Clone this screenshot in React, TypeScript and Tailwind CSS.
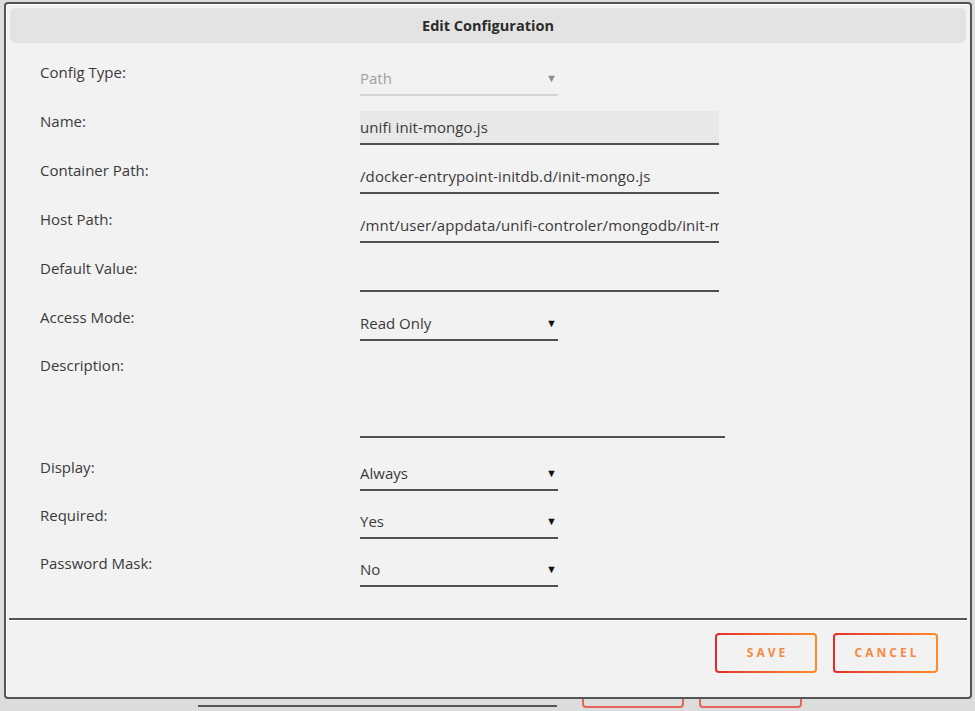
import React from 'react';

type Row = {
  label: string;
  value?: string;
  kind: 'select' | 'input' | 'textarea' | 'disabled';
  filled?: boolean;
  height: string;
};

const rows: Row[] = [
  { label: 'Config Type:', value: 'Path', kind: 'disabled', height: 'h-[49px]' },
  { label: 'Name:', value: 'unifi init-mongo.js', kind: 'input', filled: true, height: 'h-[49px]' },
  { label: 'Container Path:', value: '/docker-entrypoint-initdb.d/init-mongo.js', kind: 'input', height: 'h-[49px]' },
  { label: 'Host Path:', value: '/mnt/user/appdata/unifi-controler/mongodb/init-mongo.js', kind: 'input', height: 'h-[49px]' },
  { label: 'Default Value:', value: '', kind: 'input', height: 'h-[49px]' },
  { label: 'Access Mode:', value: 'Read Only', kind: 'select', height: 'h-[48px]' },
  { label: 'Description:', value: '', kind: 'textarea', height: 'h-[102px]' },
  { label: 'Display:', value: 'Always', kind: 'select', height: 'h-[48px]' },
  { label: 'Required:', value: 'Yes', kind: 'select', height: 'h-[48px]' },
  { label: 'Password Mask:', value: 'No', kind: 'select', height: 'h-[48px]' },
];

function Field({ row }: { row: Row }) {
  if (row.kind === 'disabled') {
    return (
      <div className="flex h-[34px] w-[198px] items-start justify-between border-b-2 border-[#d4d4d4] pt-[6px] leading-5 text-[#a0a0a0]">
        <span>{row.value}</span>
        <span className="pr-[1px] text-[11px] leading-5 text-[#8a8a8a]">▼</span>
      </div>
    );
  }
  if (row.kind === 'select') {
    return (
      <div className="flex h-[34px] w-[198px] items-start justify-between border-b-2 border-[#505050] pt-[6px] leading-5 text-[#3a3a3a]">
        <span>{row.value}</span>
        <span className="pr-[1px] text-[11px] leading-5 text-[#111]">▼</span>
      </div>
    );
  }
  if (row.kind === 'textarea') {
    return <div className="h-[83px] w-[365px] border-b-2 border-[#505050]" />;
  }
  return (
    <div
      className={`h-[34px] w-[359px] overflow-hidden whitespace-nowrap border-b-2 border-[#505050] pt-[6px] leading-5 tracking-[0.1px] text-[#3a3a3a] ${
        row.filled ? 'bg-[#e8e8e8]' : ''
      }`}
    >
      {row.value}
    </div>
  );
}

function GradientButton({ label, width }: { label: string; width: string }) {
  return (
    <div className={`rounded-[4px] bg-gradient-to-r from-[#e22a2a] to-[#ff8a2c] p-[2px] ${width}`}>
      <div className="flex h-[36px] items-center justify-center rounded-[2px] bg-[#f2f2f2] pl-[3px] text-[12px] font-bold tracking-[3px] text-[#f68a45]">
        {label}
      </div>
    </div>
  );
}

export default function App() {
  return (
    <div
      className="relative h-[711px] w-[975px] overflow-hidden bg-[#dcdcdc] text-[15px]"
      style={{ fontFamily: '"Open Sans", "Noto Sans", sans-serif' }}
    >
      {/* page behind the dialog */}
      <div className="flex items-start pt-[660px]">
        <div className="ml-[198px] h-[47px] w-[359px] border-b-2 border-[#555]" />
        <div className="ml-[25px] flex gap-[15px]">
          <div className="h-[48px] w-[102px] rounded-[4px] border-2 border-[#e8645a]" />
          <div className="h-[48px] w-[103px] rounded-[4px] border-2 border-[#e8645a]" />
        </div>
      </div>

      {/* dialog */}
      <div className="absolute left-[4px] top-[2px] flex h-[697px] w-[968px] flex-col rounded-[4px] border-2 border-[#555] bg-[#f2f2f2] shadow-[inset_1px_1px_0_#fff]">
        <div className="px-[4px] pt-[4px]">
          <div className="flex h-[35px] items-center justify-center rounded-[6px] bg-[#e3e3e3] text-[14.5px] font-bold text-[#2b2b2b]">
            Edit Configuration
          </div>
        </div>

        <div className="mt-[19px] flex flex-col pl-[34px]">
          {rows.map((row) => (
            <div key={row.label} className={`flex items-start ${row.height}`}>
              <div className="w-[320px] leading-5 text-[#3a3a3a]">{row.label}</div>
              <Field row={row} />
            </div>
          ))}
        </div>

        <div className="mx-[3px] mt-[17px] border-t-2 border-[#555] shadow-[0_1px_0_#fff]" />

        <div className="mt-[13px] flex justify-end gap-[16px] pr-[32px]">
          <GradientButton label="SAVE" width="w-[102px]" />
          <GradientButton label="CANCEL" width="w-[105px]" />
        </div>
      </div>
    </div>
  );
}
